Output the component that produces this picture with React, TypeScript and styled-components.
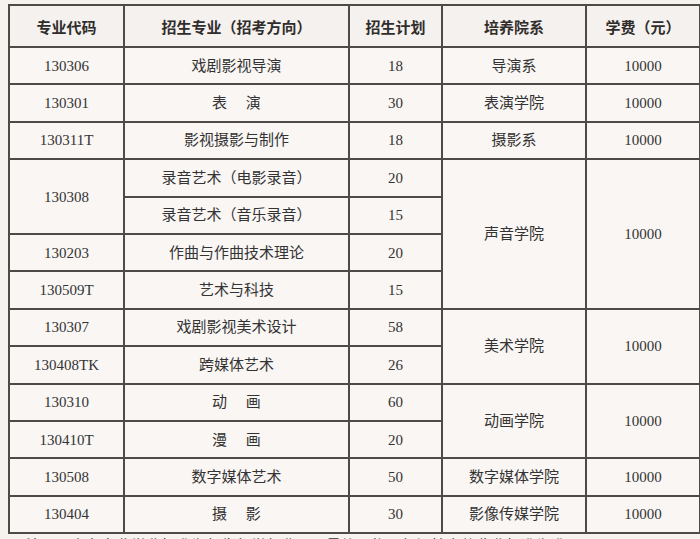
import React from "react";
import styled, { createGlobalStyle } from "styled-components";

const Global = createGlobalStyle`
  html, body {
    margin: 0;
    padding: 0;
    background: #f6f2ee;
  }
  body {
    font-family: "Liberation Serif", "Noto Sans CJK SC", serif;
    color: #333;
  }
`;

const Page = styled.div`
  padding: 4px 0 0 8px;
  height: 539px;
  overflow: hidden;
  box-sizing: border-box;
`;

const Table = styled.table`
  width: 691px;
  border-collapse: collapse;
  table-layout: fixed;
  background: #f9f6f3;
`;

const HeadRow = styled.tr`
  height: 42px;
`;

const Row = styled.tr`
  height: 37.4px;
`;

const HeaderCell = styled.th`
  border: 2px solid #4d4a48;
  font-family: "Noto Sans CJK SC", "Liberation Sans", sans-serif;
  font-weight: 700;
  font-size: 15px;
  color: #2f2d2c;
  text-align: center;
  padding: 0;
  background: #f5f1ee;
`;

const Cell = styled.td`
  border: 2px solid #4d4a48;
  font-size: 15px;
  color: #333;
  text-align: center;
  vertical-align: middle;
  padding: 0;
  line-height: 1.2;
`;

const Note = styled.p`
  margin: 1px 0 0 18px;
  font-family: "Noto Sans CJK SC", sans-serif;
  font-size: 15px;
  line-height: 20px;
  color: #333;
  white-space: nowrap;
`;

type R = {
  code?: string;
  codeSpan?: number;
  major: string;
  plan: string;
  dept?: string;
  deptSpan?: number;
  fee?: string;
};

const rows: R[] = [
  { code: "130306", major: "戏剧影视导演", plan: "18", dept: "导演系", fee: "10000" },
  { code: "130301", major: "表\u3000 演", plan: "30", dept: "表演学院", fee: "10000" },
  { code: "130311T", major: "影视摄影与制作", plan: "18", dept: "摄影系", fee: "10000" },
  { code: "130308", codeSpan: 2, major: "录音艺术（电影录音）", plan: "20", dept: "声音学院", deptSpan: 4, fee: "10000" },
  { major: "录音艺术（音乐录音）", plan: "15" },
  { code: "130203", major: "作曲与作曲技术理论", plan: "20" },
  { code: "130509T", major: "艺术与科技", plan: "15" },
  { code: "130307", major: "戏剧影视美术设计", plan: "58", dept: "美术学院", deptSpan: 2, fee: "10000" },
  { code: "130408TK", major: "跨媒体艺术", plan: "26" },
  { code: "130310", major: "动\u3000 画", plan: "60", dept: "动画学院", deptSpan: 2, fee: "10000" },
  { code: "130410T", major: "漫\u3000 画", plan: "20" },
  { code: "130508", major: "数字媒体艺术", plan: "50", dept: "数字媒体学院", fee: "10000" },
  { code: "130404", major: "摄\u3000 影", plan: "30", dept: "影像传媒学院", fee: "10000" },
];

export default function App() {
  return (
    <>
      <Global />
      <Page>
        <Table>
          <colgroup>
            <col style={{ width: 115 }} />
            <col style={{ width: 225 }} />
            <col style={{ width: 93 }} />
            <col style={{ width: 144 }} />
            <col style={{ width: 114 }} />
          </colgroup>
          <thead>
            <HeadRow>
              <HeaderCell>专业代码</HeaderCell>
              <HeaderCell>招生专业（招考方向）</HeaderCell>
              <HeaderCell>招生计划</HeaderCell>
              <HeaderCell>培养院系</HeaderCell>
              <HeaderCell>学费（元）</HeaderCell>
            </HeadRow>
          </thead>
          <tbody>
            {rows.map((r, i) => (
              <Row key={i}>
                {r.code && <Cell rowSpan={r.codeSpan ?? 1}>{r.code}</Cell>}
                <Cell>{r.major}</Cell>
                <Cell>{r.plan}</Cell>
                {r.dept && <Cell rowSpan={r.deptSpan ?? 1}>{r.dept}</Cell>}
                {r.fee && <Cell rowSpan={r.deptSpan ?? 1}>{r.fee}</Cell>}
              </Row>
            ))}
          </tbody>
        </Table>
        <Note>注：以上各专业学费标准为每生每学年费用，最终以物价部门核定的收费标准为准。</Note>
      </Page>
    </>
  );
}
